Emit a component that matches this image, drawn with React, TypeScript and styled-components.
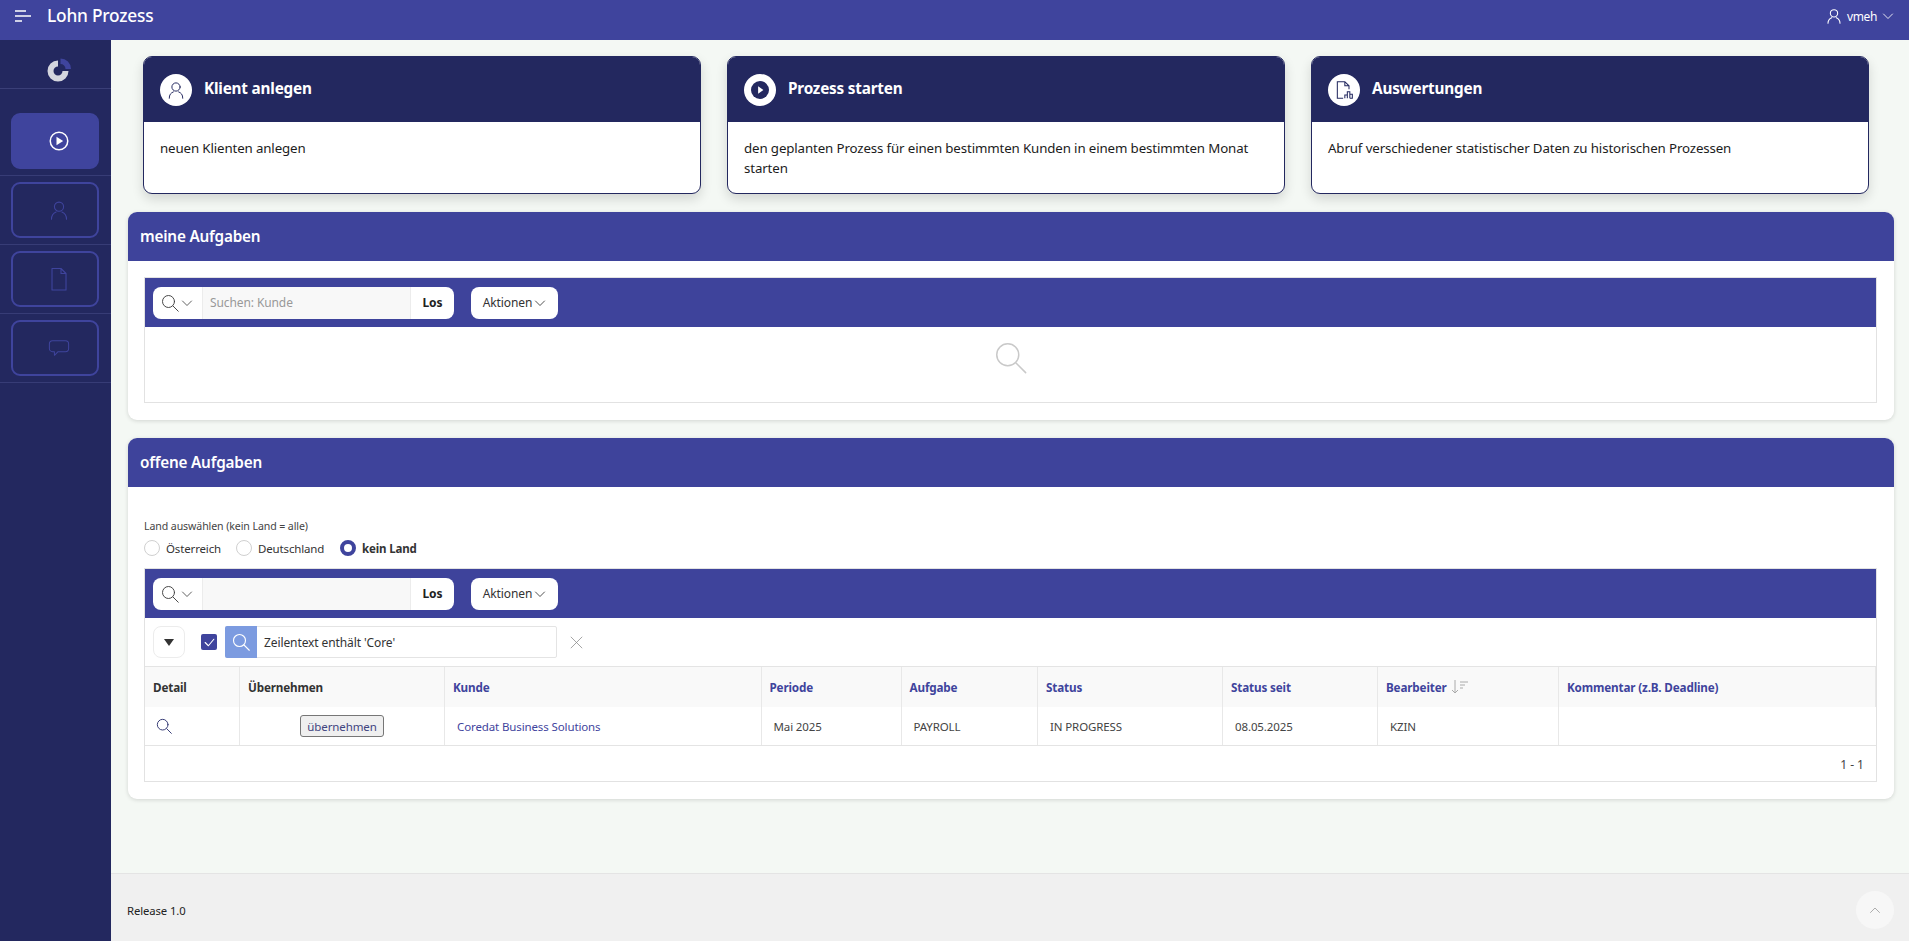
import React from "react";
import styled, { createGlobalStyle } from "styled-components";

const BLUE = "#3f449d";
const NAVY = "#23285f";
const FONT = `"Noto Sans", "Open Sans", "Liberation Sans", sans-serif`;

const Global = createGlobalStyle`
  html, body { margin: 0; padding: 0; height: 100%; background: #f4f8f4; }
  #root { height: 100%; }
  * { box-sizing: border-box; }
  body { font-family: ${FONT}; color: #222; overflow: hidden; }
`;

const Page = styled.div`display:flex;flex-direction:column;height:941px;width:1909px;`;
const TopBar = styled.header`
  height:40px;flex:none;background:${BLUE};color:#fff;display:flex;align-items:center;padding:0 15px 0 15px;
`;
const Brand = styled.div`font-size:17.3px;font-weight:500;margin-left:16px;letter-spacing:-.2px;margin-top:-10px;`;
const HamburgerWrap = styled.span`display:flex;margin-top:-8px;color:#fff;`;
const UserMenu = styled.div`margin-left:auto;display:flex;align-items:center;gap:5px;font-size:12px;letter-spacing:-.4px;margin-top:-8px;`;
const Body = styled.div`flex:1;display:flex;min-height:0;`;
const Side = styled.nav`width:111px;flex:none;background:${NAVY};display:flex;flex-direction:column;`;
const LogoBox = styled.div`height:49px;border-bottom:1px solid #3a3f78;display:flex;align-items:center;justify-content:center;padding:11px 0 0 8px;margin-bottom:18px;`;
const SideRow = styled.div`height:69px;padding:6px 12px 6px 11px;border-bottom:1px solid #373c76;display:flex;`;
const SideBtn = styled.button<{ $active?: boolean }>`
  flex:1;margin:0;height:56px;border-radius:9px;cursor:pointer;display:flex;align-items:center;justify-content:center;padding:0 0 0 8px;
  background:${p => (p.$active ? BLUE : "transparent")};
  border:2px solid ${BLUE};
  color:${p => (p.$active ? "#fff" : "#3f449d")};
`;
const Main = styled.main`flex:1;min-width:0;display:flex;flex-direction:column;`;
const Cards = styled.section`display:grid;grid-template-columns:repeat(3,558px);column-gap:26px;padding:16px 0 0 32px;`;
const Card = styled.article`
  height:138px;background:#fff;border:1px solid ${NAVY};border-radius:9px;overflow:hidden;box-shadow:0 5px 12px rgba(0,0,0,.14);
`;
const CardHead = styled.div`height:65px;background:${NAVY};display:flex;align-items:center;padding:0 16px;gap:12px;`;
const CardIcon = styled.span`width:32px;height:32px;border-radius:50%;background:#fff;color:${NAVY};display:flex;align-items:center;justify-content:center;flex:none;`;
const CardTitle = styled.h3`margin:-3px 0 0;color:#fff;font-size:15.3px;font-weight:700;letter-spacing:-.2px;`;
const CardText = styled.p`margin:0;padding:16px 16px 0;font-size:13.3px;line-height:20px;color:#1c1c1c;letter-spacing:-.13px;`;
const Region = styled.section`
  margin:18px 15px 0 17px;background:#fff;border-radius:9px;box-shadow:0 1px 4px rgba(0,0,0,.14);
`;
const RegionHead = styled.h2`
  margin:0;height:49px;background:#3e439b;color:#fff;border-radius:9px 9px 0 0;display:flex;align-items:center;padding:0 12px 2px;
  font-size:15.3px;font-weight:600;letter-spacing:-.2px;
`;
const RegionBody = styled.div`padding:16px 17px 17px 16px;`;
const Report = styled.div`border:1px solid #e2e2e2;`;
const Toolbar = styled.div`height:49px;background:#3e439b;display:flex;align-items:center;padding:0 0 0 8px;gap:17px;`;
const SearchGroup = styled.div`height:32px;width:301px;background:#fff;border-radius:8px;display:flex;overflow:hidden;`;
const SearchType = styled.span`width:49px;display:flex;align-items:center;gap:2px;padding-left:8px;color:#444;flex:none;`;
const SearchInput = styled.div`flex:1;background:#f8f8f8;border:1px solid #ececec;border-width:0 1px;display:flex;align-items:center;padding-left:7px;font-size:12px;color:#999;letter-spacing:-.1px;`;
const Go = styled.span`width:43px;flex:none;display:flex;align-items:center;justify-content:center;font-size:12px;font-weight:700;color:#222;`;
const Actions = styled.button`
  height:32px;width:87px;background:#fff;border:none;border-radius:8px;display:flex;align-items:center;justify-content:center;gap:2px;
  font:12px ${FONT};color:#333;letter-spacing:-.1px;padding:0;
`;
const EmptyState = styled.div`height:75px;display:flex;align-items:center;justify-content:center;color:#c9c9c9;padding-bottom:14px;`;
const CountryForm = styled.div`padding:15px 0 9px 0;`;
const CountryLabel = styled.div`font-size:10.6px;line-height:16px;color:#444;letter-spacing:-.1px;`;
const RadioRow = styled.div`display:flex;align-items:center;height:22px;margin-top:3px;`;
const RadioDot = styled.span<{ $on?: boolean }>`
  width:16px;height:16px;border-radius:50%;flex:none;background:#fff;
  border:${p => (p.$on ? `4px solid ${BLUE}` : "1px solid #d0d0d0")};
`;
const RadioText = styled.span<{ $on?: boolean; $w: number }>`
  margin-left:6px;width:${p => p.$w}px;font-size:11.5px;color:#333;font-weight:${p => (p.$on ? 700 : 400)};letter-spacing:-.15px;white-space:nowrap;
`;
const FilterRow = styled.div`height:49px;display:flex;align-items:center;padding-left:8px;border-bottom:1px solid #e4e4e4;`;
const Toggle = styled.span`width:32px;height:32px;border:1px solid #ececec;border-radius:8px;display:flex;align-items:center;justify-content:center;color:#333;`;
const Check = styled.span`width:16px;height:16px;margin-left:16px;border-radius:2px;background:${BLUE};display:flex;align-items:center;justify-content:center;color:#fff;`;
const FilterBox = styled.div`margin-left:8px;width:332px;height:32px;border:1px solid #e4e4e4;border-radius:2px;display:flex;align-items:center;font-size:12px;color:#333;letter-spacing:-.1px;`;
const FilterIcon = styled.span`width:32px;height:32px;margin:-1px 0 -1px -1px;background:#7c9be0;color:#fff;display:flex;align-items:center;justify-content:center;border-radius:2px 0 0 2px;flex:none;`;
const FilterText = styled.span`margin-left:7px;`;
const Remove = styled.span`margin-left:13px;display:flex;color:#888;`;
const Grid = styled.div`
  display:grid;grid-template-columns:95px 205px 316.5px 140px 136.5px 185px 155px 181px 1fr;border-bottom:1px solid #e4e4e4;
`;
const Th = styled.div<{ $link?: boolean }>`
  height:40px;background:#f9f9f9;display:flex;align-items:center;gap:4px;padding-left:8px;font-size:11.7px;font-weight:700;letter-spacing:-.15px;
  color:${p => (p.$link ? BLUE : "#333")};border-right:1px solid #e8e8e8;
  &:last-of-type{border-right:none;}
`;
const Td = styled.div<{ $link?: boolean; $center?: boolean }>`
  height:38px;display:flex;align-items:center;font-size:11.5px;letter-spacing:-.12px;
  padding-left:${p => (p.$center ? 0 : 12)}px;justify-content:${p => (p.$center ? "center" : "flex-start")};
  color:${p => (p.$link ? BLUE : "#444")};border-right:1px solid #e8e8e8;
`;
const TdLast = styled(Td)`border-right:none;`;
const DetailCell = styled(Td)`padding-left:11px;color:#3a3f78;`;
const TakeBtn = styled.button`
  height:22px;width:84px;padding:0;background:#efefef;border:1px solid #767676;border-radius:3px;font:11.5px ${FONT};color:#3f4480;letter-spacing:-.12px;
`;
const Pager = styled.div`height:35px;display:flex;align-items:center;justify-content:flex-end;padding:2px 12px 0 0;font-size:12px;color:#444;`;
const Footer = styled.footer`
  margin-top:auto;height:68px;flex:none;background:#f0f0f0;border-top:1px solid #e4e4e4;display:flex;align-items:center;justify-content:space-between;padding:5px 15px 0 16px;
  font-size:11.3px;color:#222;letter-spacing:-.1px;
`;
const TopBtn = styled.span`width:38px;height:38px;border-radius:50%;background:#f7f7f7;display:flex;align-items:center;justify-content:center;color:#999;`;

const Svg = ({ s, children, w = 1, fill = "none" }: { s: number; children: React.ReactNode; w?: number; fill?: string }) => (
  <svg width={s} height={s} viewBox="0 0 24 24" fill={fill} stroke="currentColor" strokeWidth={w} strokeLinecap="round" strokeLinejoin="round">{children}</svg>
);
const SearchIc = ({ s = 18, w = 1.3 }: { s?: number; w?: number }) => (
  <Svg s={s} w={w}><circle cx="10" cy="10" r="8" /><path d="M16 16l7 7" /></Svg>
);
const Chevron = ({ s = 12 }: { s?: number }) => <Svg s={s} w={1.7}><path d="M3 8l9 9 9-9" /></Svg>;
const UserIc = ({ s = 20, w = 1.3 }: { s?: number; w?: number }) => (
  <Svg s={s} w={w}><circle cx="12" cy="8" r="5.5" /><path d="M3 23c0-5 2-7 5.5-8.5M21 23c0-5-2-7-5.5-8.5" /></Svg>
);
const PlayCircle = ({ s = 20 }: { s?: number }) => (
  <svg width={s} height={s} viewBox="0 0 24 24"><circle cx="12" cy="12" r="10.5" fill="none" stroke="currentColor" strokeWidth="1.800" /><path d="M9 7l8 5-8 5z" fill="currentColor" /></svg>
);
const FileIc = () => (
  <Svg s={24} w={1.1}><path d="M5 1.500h9l5 5v16.500H5zM14 1.500v5h5" /></Svg>
);
const ChatIc = () => (
  <Svg s={22} w={1.1}><path d="M5 4h14a3.500 3.500 0 0 1 3.500 3.500v5a3.500 3.500 0 0 1-3.500 3.500H11l-4 4v-4H5a3.500 3.500 0 0 1-3.500-3.500v-5A3.500 3.500 0 0 1 5 4z" /></Svg>
);

const Logo = () => (
  <svg width="26" height="26" viewBox="0 0 26 26">
    <path d="M11 3.500A10.500 10.500 0 1 0 21.500 14L15.500 14A4.500 4.500 0 1 1 11 9.500Z" fill="#d4d6de" />
    <path d="M13.500 1.500A10.500 10.500 0 0 1 24 12L18.500 12A5 5 0 0 0 13.500 7Z" fill="#3f449d" />
  </svg>
);
const Hamburger = () => (
  <svg width="16" height="12" viewBox="0 0 16 12" stroke="currentColor" strokeWidth="1.6"><path d="M0 1h11M0 6h16M0 11h7" /></svg>
);
const Report2Icon = () => (
  <svg width="20" height="20" viewBox="0 0 24 24" fill="none" stroke="currentColor" strokeWidth="1.25">
    <path d="M11 22H4V2h9l5 5v4M13 2v5h5" />
    <path d="M13 22v-4h3v4M16 22v-8h3v8M19 22h3v-5h-3" />
  </svg>
);
const CardPlay = () => (
  <svg width="18" height="18" viewBox="0 0 24 24"><circle cx="12" cy="12" r="12" fill="currentColor" /><path d="M9.500 7l7 5-7 5z" fill="#fff" /></svg>
);
const SortIc = () => (
  <svg width="18" height="14" viewBox="0 0 18 14" fill="none" stroke="#aaa" strokeWidth="1"><path d="M4 0v13M1 10l3 3 3-3M9 2h8M9 5h5M9 8h3" /></svg>
);

const heads: [string, boolean][] = [
  ["Detail", false], ["Übernehmen", false], ["Kunde", true], ["Periode", true], ["Aufgabe", true],
  ["Status", true], ["Status seit", true], ["Bearbeiter", true], ["Kommentar (z.B. Deadline)", true],
];

const ToolbarBlock = ({ placeholder }: { placeholder?: string }) => (
  <Toolbar>
    <SearchGroup>
      <SearchType><SearchIc /><Chevron /></SearchType>
      <SearchInput>{placeholder}</SearchInput>
      <Go>Los</Go>
    </SearchGroup>
    <Actions>Aktionen <Chevron /></Actions>
  </Toolbar>
);

export default function App() {
  return (
    <Page>
      <Global />
      <TopBar>
        <HamburgerWrap><Hamburger /></HamburgerWrap>
        <Brand>Lohn Prozess</Brand>
        <UserMenu><UserIc s={16} w={1.6} /> vmeh <Chevron s={12} /></UserMenu>
      </TopBar>
      <Body>
        <Side>
          <LogoBox><Logo /></LogoBox>
          <SideRow><SideBtn $active><PlayCircle /></SideBtn></SideRow>
          <SideRow><SideBtn><UserIc /></SideBtn></SideRow>
          <SideRow><SideBtn><FileIc /></SideBtn></SideRow>
          <SideRow><SideBtn><ChatIc /></SideBtn></SideRow>
        </Side>
        <Main>
          <Cards>
            <Card>
              <CardHead><CardIcon><UserIc s={18} w={1.3} /></CardIcon><CardTitle>Klient anlegen</CardTitle></CardHead>
              <CardText>neuen Klienten anlegen</CardText>
            </Card>
            <Card>
              <CardHead><CardIcon><CardPlay /></CardIcon><CardTitle>Prozess starten</CardTitle></CardHead>
              <CardText>den geplanten Prozess für einen bestimmten Kunden in einem bestimmten Monat starten</CardText>
            </Card>
            <Card>
              <CardHead><CardIcon><Report2Icon /></CardIcon><CardTitle>Auswertungen</CardTitle></CardHead>
              <CardText>Abruf verschiedener statistischer Daten zu historischen Prozessen</CardText>
            </Card>
          </Cards>
          <Region>
            <RegionHead>meine Aufgaben</RegionHead>
            <RegionBody>
              <Report>
                <ToolbarBlock placeholder="Suchen: Kunde" />
                <EmptyState><SearchIc s={33} w={1.1} /></EmptyState>
              </Report>
            </RegionBody>
          </Region>
          <Region>
            <RegionHead>offene Aufgaben</RegionHead>
            <RegionBody>
              <CountryForm>
                <CountryLabel>Land auswählen (kein Land = alle)</CountryLabel>
                <RadioRow>
                  <RadioDot /><RadioText $w={70}>Österreich</RadioText>
                  <RadioDot /><RadioText $w={82}>Deutschland</RadioText>
                  <RadioDot $on /><RadioText $on $w={70}>kein Land</RadioText>
                </RadioRow>
              </CountryForm>
              <Report>
                <ToolbarBlock />
                <FilterRow>
                  <Toggle><svg width="10" height="7" viewBox="0 0 10 7"><path d="M0 0h10L5 7z" fill="currentColor" /></svg></Toggle>
                  <Check><Svg s={13} w={2}><path d="M4 12l6 6L20 6" /></Svg></Check>
                  <FilterBox>
                    <FilterIcon><SearchIc s={18} w={1.5} /></FilterIcon>
                    <FilterText>Zeilentext enthält 'Core'</FilterText>
                  </FilterBox>
                  <Remove><Svg s={13} w={1.4}><path d="M2 2l20 20M22 2L2 22" /></Svg></Remove>
                </FilterRow>
                <Grid>
                  {heads.map(([h, link]) => (
                    <Th key={h} $link={link}>{h}{h === "Bearbeiter" && <SortIc />}</Th>
                  ))}
                  <DetailCell><SearchIc s={16} w={1.5} /></DetailCell>
                  <Td $center><TakeBtn>übernehmen</TakeBtn></Td>
                  <Td $link>Coredat Business Solutions</Td>
                  <Td>Mai 2025</Td>
                  <Td>PAYROLL</Td>
                  <Td>IN PROGRESS</Td>
                  <Td>08.05.2025</Td>
                  <Td>KZIN</Td>
                  <TdLast />
                </Grid>
                <Pager>1 - 1</Pager>
              </Report>
            </RegionBody>
          </Region>
          <Footer>
            <span>Release 1.0</span>
            <TopBtn><Svg s={12} w={1.6}><path d="M3 17l9-9 9 9" /></Svg></TopBtn>
          </Footer>
        </Main>
      </Body>
    </Page>
  );
}
